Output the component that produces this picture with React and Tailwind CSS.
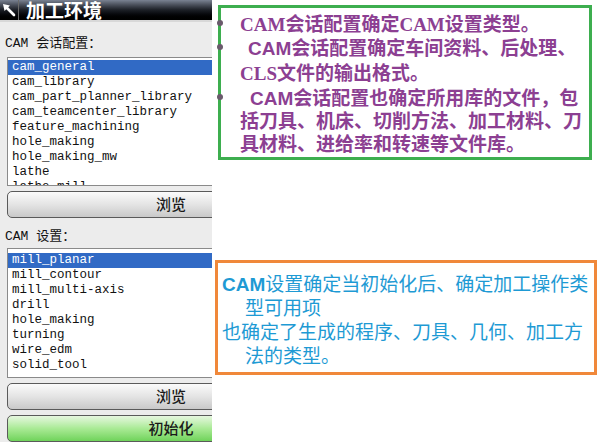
const sessionItems = [
    "cam_general",
    "cam_library",
    "cam_part_planner_library",
    "cam_teamcenter_library",
    "feature_machining",
    "hole_making",
    "hole_making_mw",
    "lathe",
    "lathe_mill",
];

const setupItems = [
    "mill_planar",
    "mill_contour",
    "mill_multi-axis",
    "drill",
    "hole_making",
    "turning",
    "wire_edm",
    "solid_tool",
];

const cjk = "font-['Noto_Sans_CJK_SC',sans-serif]";
const mono = "font-['Liberation_Mono','Noto_Sans_CJK_SC',monospace]";

const ListBox = ({ items, className }) => (
    <div className={`border border-[#8a8a8a] bg-white overflow-hidden ${className}`}>
        {items.map((item, i) => (
            <div
                key={item}
                className={`h-[15px] leading-[15px] pl-[4px] text-[12.5px] ${mono} ${
                    i === 0 ? "bg-[#316ac5] text-white" : "text-[#111]"
                }`}
            >
                {item}
            </div>
        ))}
    </div>
);

const Button = ({ children, green }) => (
    <div
        className={`h-[27px] rounded-[5px] border border-[#5a5a5a] flex items-center justify-center text-[15px] font-medium text-[#1a1a1a] ${cjk} ${
            green
                ? "bg-gradient-to-b from-[#e6f7df] via-[#a9ea95] to-[#6fd35a]"
                : "bg-gradient-to-b from-[#fbfbfb] via-[#e4e4e4] to-[#c9c9c9]"
        }`}
    >
        {children}
    </div>
);

// one line of a note, fixed height so mixed fonts can't push it around
const Line = ({ h, bullet, children }) => (
    <div className={`relative flex items-center ${h}`}>
        {bullet && (
            <span className="absolute left-[-23px] top-1/2 -translate-y-1/2 w-[6px] h-[6px] rounded-full bg-[#6a5a6c]" />
        )}
        <div className="leading-[22px] h-[22px]">{children}</div>
    </div>
);

const Serif = ({ children }) => (
    <span className="font-['Liberation_Serif'] font-bold">{children}</span>
);
const Sans = ({ children, className = "" }) => (
    <span className={`font-['Liberation_Sans'] font-bold ${className}`}>{children}</span>
);

export default function App() {
    return (
        <div className="w-[600px] h-[442px] flex bg-white overflow-hidden">
            {/* Left: dialog panel */}
            <div className="w-[212px] shrink-0 overflow-hidden bg-[#ececec]">
                <div className="w-[342px]">
                    <div className="h-[22px] flex items-center bg-gradient-to-b from-[#7a8292] via-[#1c1f26] to-black border-b-2 border-[#d8d8d8]">
                        <div className="w-[19px] h-full flex items-center justify-center border-r border-[#6a6a6a]">
                            <svg width="14" height="14" viewBox="0 0 14 14">
                                <path d="M1 1 L8 2.5 L2.5 8 Z" fill="white" />
                                <path d="M4 4 L12 12" stroke="white" strokeWidth="2.6" strokeLinecap="round" />
                            </svg>
                        </div>
                        <span className={`ml-[7px] text-white font-bold text-[19px] leading-[20px] ${cjk}`}>
                            加工环境
                        </span>
                    </div>

                    <div className="px-[7px]">
                        <div className={`mt-[14px] -ml-[2px] h-[16px] leading-[16px] text-[13px] text-[#111] ${mono}`}>
                            CAM 会话配置：
                        </div>
                        <ListBox items={sessionItems} className="mt-[5px] h-[129px] pt-[2px]" />
                        <div className="mt-[5px]">
                            <Button>浏览</Button>
                        </div>

                        <div className={`mt-[11px] -ml-[2px] h-[16px] leading-[16px] text-[13px] text-[#111] ${mono}`}>
                            CAM 设置：
                        </div>
                        <ListBox items={setupItems} className="mt-[3px] h-[130px] pt-[4px]" />
                        <div className="mt-[5px]">
                            <Button>浏览</Button>
                        </div>
                        <div className="mt-[5px]">
                            <Button green>初始化</Button>
                        </div>
                    </div>
                </div>
            </div>

            {/* Right: notes */}
            <div className="flex-1 flex flex-col">
                <div
                    className={`mt-[5px] ml-[6px] w-[374px] h-[155px] border-[3px] border-[#3dae4f] pl-[19px] pt-[2px] text-[19px] font-semibold text-[#8c3f92] whitespace-nowrap ${cjk}`}
                >
                    <Line h="h-[25px]" bullet>
                        <Serif>CAM</Serif>会话配置确定<Serif>CAM</Serif>设置类型。
                    </Line>
                    <Line h="h-[23px]" bullet>
                        <Sans className="pl-[8px]">CAM</Sans>会话配置确定车间资料、后处理、
                    </Line>
                    <Line h="h-[27px]">
                        <Serif>CLS</Serif>文件的输出格式。
                    </Line>
                    <Line h="h-[23px]" bullet>
                        <Sans className="pl-[10px]">CAM</Sans>会话配置也确定所用库的文件，包
                    </Line>
                    <Line h="h-[23px]">括刀具、机床、切削方法、加工材料、刀</Line>
                    <Line h="h-[24px]">具材料、进给率和转速等文件库。</Line>
                </div>

                <div
                    className={`mt-[100px] ml-[3px] w-[382px] h-[115px] border-[3px] border-[#f0883a] pt-[8px] pl-[4px] text-[19px] text-[#1e9ad4] whitespace-nowrap ${cjk}`}
                >
                    <Line h="h-[24px]">
                        <Sans>CAM</Sans>设置确定当初始化后、确定加工操作类
                    </Line>
                    <Line h="h-[24px]">
                        <span className="pl-[23px]">型可用项</span>
                    </Line>
                    <Line h="h-[24px]">也确定了生成的程序、刀具、几何、加工方</Line>
                    <Line h="h-[24px]">
                        <span className="pl-[23px]">法的类型。</span>
                    </Line>
                </div>
            </div>
        </div>
    );
}
